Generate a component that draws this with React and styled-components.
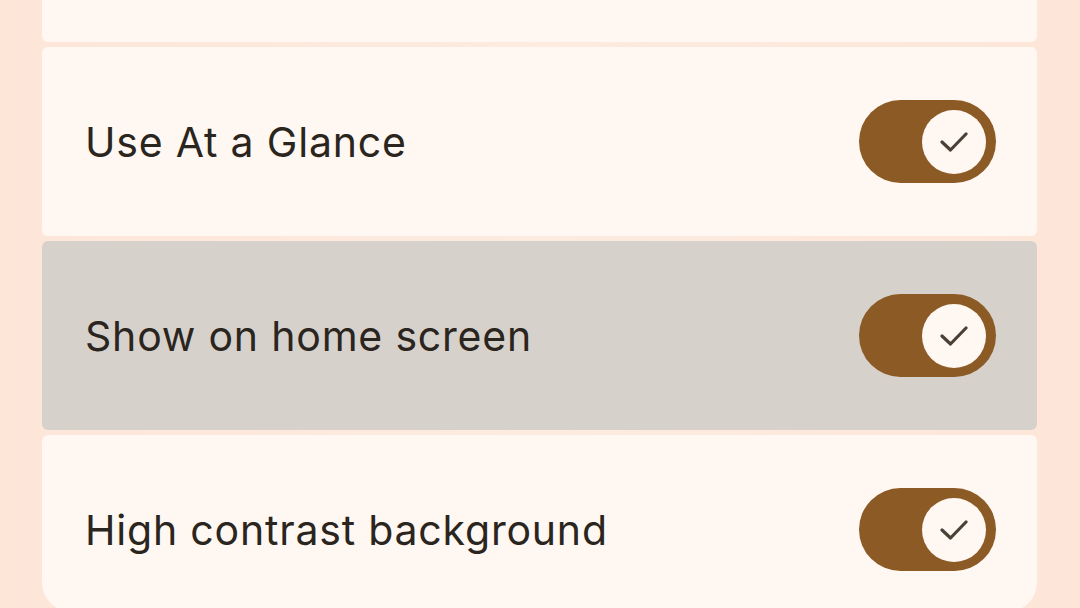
import React from 'react';
import styled, { createGlobalStyle } from 'styled-components';

const GlobalStyle = createGlobalStyle`
  html, body {
    margin: 0;
    padding: 0;
    background: #fde8dc;
    overflow: hidden;
  }
`

const Page = styled.div`
  width: 1080px;
  height: 608px;
  box-sizing: border-box;
  padding: 0 43px 0 42px;
  display: flex;
  flex-direction: column;
  gap: 5px;
  background: linear-gradient(90deg, #fde6d8 0%, #fdebe0 50%, #fde6d8 100%);
  font-family: "Inter", "Noto Sans", sans-serif;
`

const TopCard = styled.div`
  height: 42px;
  flex-shrink: 0;
  background: #fff8f2;
  border-radius: 0 0 6px 6px;
`

const Row = styled.div`
  height: ${p => (p.last ? '177px' : '189px')};
  flex-shrink: 0;
  box-sizing: border-box;
  display: flex;
  align-items: center;
  justify-content: space-between;
  padding: ${p => (p.last ? '12px 41px 0 43px' : '0 41px 0 43px')};
  background: ${p => (p.pressed ? '#d7d1cc' : '#fff8f2')};
  border-radius: ${p => (p.last ? '6px 6px 30px 30px' : '6px')};
`

const Label = styled.span`
  font-size: 41px;
  color: #2b2520;
  letter-spacing: 0.8px;
`

const Track = styled.div`
  width: 137px;
  height: 83px;
  border-radius: 42px;
  background: #8b5a25;
  display: flex;
  align-items: center;
  justify-content: flex-end;
  padding: 0 10px;
  box-sizing: border-box;
`

const Thumb = styled.div`
  width: 64px;
  height: 64px;
  border-radius: 50%;
  background: #fff8f2;
  display: flex;
  align-items: center;
  justify-content: center;
`

const Toggle = () => (
  <Track>
    <Thumb>
      <svg width="28" height="20" viewBox="0 0 28 20" fill="none">
        <path d="M2 10 L10.5 18 L26 2" stroke="#4b4036" strokeWidth="3.2" strokeLinecap="round" strokeLinejoin="round" />
      </svg>
    </Thumb>
  </Track>
)

const items = ['Use At a Glance', 'Show on home screen', 'High contrast background']

export default function App() {
  return (
    <>
      <GlobalStyle />
      <Page>
        <TopCard />
        {items.map((label, i) => (
          <Row key={label} pressed={i === 1} last={i === items.length - 1}>
            <Label>{label}</Label>
            <Toggle />
          </Row>
        ))}
      </Page>
    </>
  );
}
